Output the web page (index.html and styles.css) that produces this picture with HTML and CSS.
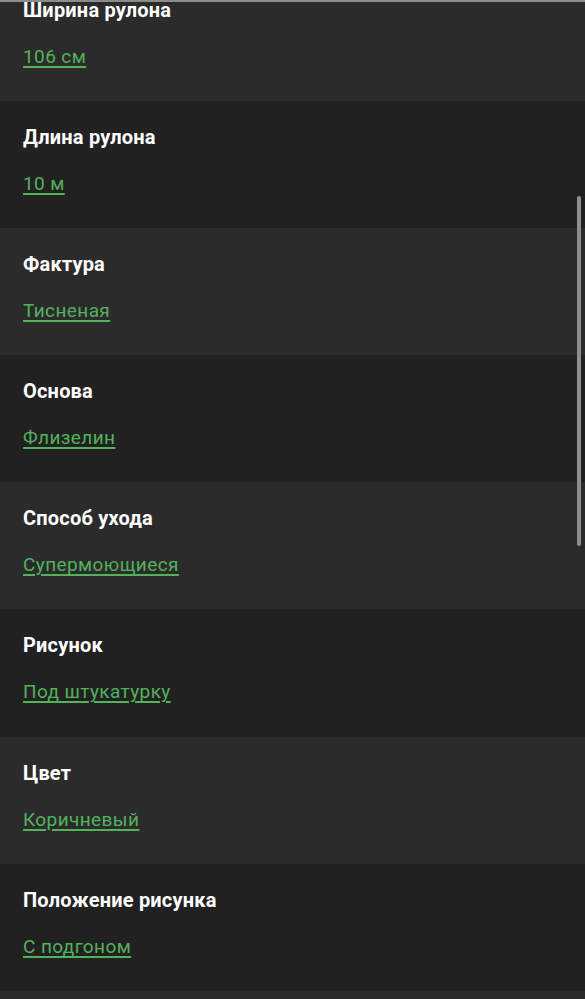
FILE: index.html
```html
<!DOCTYPE html>
<html lang="ru">
<head>
<meta charset="utf-8">
<link rel="stylesheet" href="styles.css">
</head>
<body>
<div class="page">
  <div class="list">
    <div class="row light"><div class="title">Ширина рулона</div><a class="value">106 см</a></div>
    <div class="row dark"><div class="title">Длина рулона</div><a class="value">10 м</a></div>
    <div class="row light"><div class="title">Фактура</div><a class="value">Тисненая</a></div>
    <div class="row dark"><div class="title">Основа</div><a class="value">Флизелин</a></div>
    <div class="row light"><div class="title">Способ ухода</div><a class="value">Супермоющиеся</a></div>
    <div class="row dark"><div class="title">Рисунок</div><a class="value">Под штукатурку</a></div>
    <div class="row light"><div class="title">Цвет</div><a class="value">Коричневый</a></div>
    <div class="row dark"><div class="title">Положение рисунка</div><a class="value">С подгоном</a></div>
    <div class="row light"></div>
  </div>
  <div class="topline"></div>
  <div class="scrollbar"></div>
</div>
</body>
</html>
```
FILE: styles.css
```css
html, body {
  margin: 0;
  padding: 0;
  background: #2c2b2c;
}
.page {
  position: relative;
  width: 585px;
  height: 999px;
  overflow: hidden;
  font-family: Roboto, "Noto Sans", sans-serif;
}
.list {
  margin-top: -26px;
  display: flex;
  flex-direction: column;
}
.row {
  height: 127.1px;
  flex-shrink: 0;
  box-sizing: border-box;
  padding: 24px 23px 0 23px;
  display: flex;
  flex-direction: column;
  align-items: flex-start;
}
.light { background: #2c2b2c; }
.dark { background: #222122; }
.title {
  color: #ffffff;
  font-weight: 700;
  font-size: 20px;
  line-height: 24px;
  letter-spacing: 0.2px;
}
.value {
  margin-top: 23px;
  color: #52b25c;
  font-size: 19px;
  line-height: 24px;
  letter-spacing: 0.4px;
  text-decoration: underline;
  text-decoration-thickness: 2px;
  text-underline-offset: 3px;
}
.topline {
  position: absolute;
  left: 0;
  top: 0;
  width: 100%;
  height: 2px;
  background: #8c8c8c;
}
.scrollbar {
  position: absolute;
  left: 577px;
  top: 196px;
  width: 4px;
  height: 350px;
  border-radius: 2px;
  background: #8e8e8e;
}
```
